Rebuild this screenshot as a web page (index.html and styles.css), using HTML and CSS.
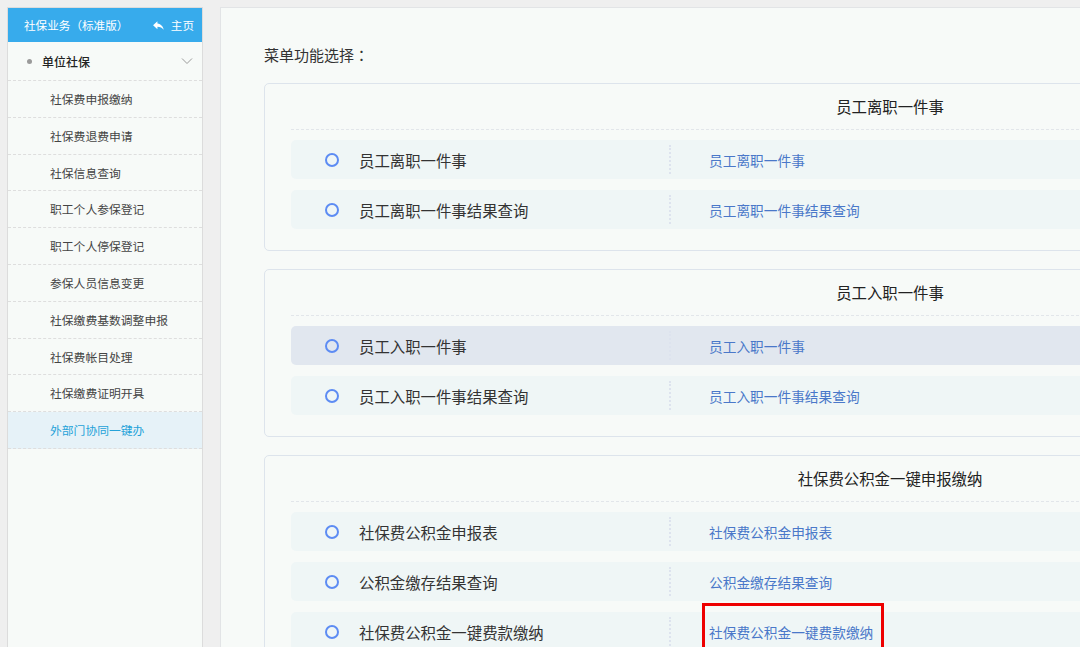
FILE: index.html
```html
<!DOCTYPE html>
<html lang="zh-CN">
<head>
<meta charset="utf-8">
<title>社保业务</title>
<link rel="stylesheet" href="styles.css">
</head>
<body>
<div class="page">
  <aside class="sidebar">
    <div class="side-head">
      <span class="side-title">社保业务（标准版）</span>
      <span class="home">
        <svg class="home-icon" viewBox="0 0 24 24" width="13" height="13"><path d="M10 8.5V4L2 11.5 10 19v-4.6c5.2 0 8.8 1.7 11.6 5.6-1.1-5.6-4.5-10.4-11.6-11.5z" fill="#ffffff"/></svg>
        主页
      </span>
    </div>
    <div class="group">
      <span class="dot"></span>
      <span class="group-name">单位社保</span>
      <svg class="chev" viewBox="0 0 12 8" width="12" height="8"><path d="M1 1.5l5 5 5-5" fill="none" stroke="#9a9a9a" stroke-width="1"/></svg>
    </div>
    <ul class="sub">
      <li>社保费申报缴纳</li>
      <li>社保费退费申请</li>
      <li>社保信息查询</li>
      <li>职工个人参保登记</li>
      <li>职工个人停保登记</li>
      <li>参保人员信息变更</li>
      <li>社保缴费基数调整申报</li>
      <li>社保费帐目处理</li>
      <li>社保缴费证明开具</li>
      <li class="active">外部门协同一键办</li>
    </ul>
  </aside>

  <main class="main">
    <h2 class="menu-title">菜单功能选择<span class="colon" lang="zh-TW">：</span></h2>

    <section class="card">
      <div class="card-title">员工离职一件事</div>
      <div class="rows">
        <div class="row"><div class="cell-name"><span class="radio"></span>员工离职一件事</div><div class="cell-link">员工离职一件事</div></div>
        <div class="row"><div class="cell-name"><span class="radio"></span>员工离职一件事结果查询</div><div class="cell-link">员工离职一件事结果查询</div></div>
      </div>
    </section>

    <section class="card">
      <div class="card-title">员工入职一件事</div>
      <div class="rows">
        <div class="row hover"><div class="cell-name"><span class="radio"></span>员工入职一件事</div><div class="cell-link">员工入职一件事</div></div>
        <div class="row"><div class="cell-name"><span class="radio"></span>员工入职一件事结果查询</div><div class="cell-link">员工入职一件事结果查询</div></div>
      </div>
    </section>

    <section class="card">
      <div class="card-title">社保费公积金一键申报缴纳</div>
      <div class="rows">
        <div class="row"><div class="cell-name"><span class="radio"></span>社保费公积金申报表</div><div class="cell-link">社保费公积金申报表</div></div>
        <div class="row"><div class="cell-name"><span class="radio"></span>公积金缴存结果查询</div><div class="cell-link">公积金缴存结果查询</div></div>
        <div class="row"><div class="cell-name"><span class="radio"></span>社保费公积金一键费款缴纳</div><div class="cell-link"><span class="marked">社保费公积金一键费款缴纳</span></div></div>
      </div>
    </section>
  </main>
</div>
</body>
</html>
```
FILE: styles.css
```css
*, *::before, *::after { box-sizing: border-box; }
html, body {
  margin: 0;
  padding: 0;
  background: #efefef;
  overflow: hidden;
  font-family: "Noto Sans CJK SC", "Noto Sans", sans-serif;
}
.page {
  display: flex;
  align-items: flex-start;
  padding: 7px 0 0 7px;
  gap: 17px;
  width: 1400px;
}
.sidebar {
  flex: 0 0 196px;
  min-height: 700px;
  background: #f7faf8;
  border: 1px solid #dcdcdc;
}
.side-head {
  height: 34px;
  background: #37abec;
  color: #fff;
  display: flex;
  align-items: center;
  justify-content: space-between;
  padding: 0 8px 0 16px;
  font-size: 11.6px;
}
.home { display: flex; align-items: center; gap: 6px; }
.home-icon { display: block; }
.group {
  height: 39px;
  display: flex;
  align-items: center;
  padding: 0 9px 0 19px;
  border-bottom: 1px dashed #dedede;
}
.dot {
  width: 5px; height: 5px; border-radius: 50%;
  background: #9a9a9a;
  margin-right: 10px;
}
.group-name { font-size: 12px; color: #222; font-weight: 500; flex: 1; }
.chev { display: block; }
.sub { list-style: none; margin: 0; padding: 0; }
.sub li {
  height: 36.8px;
  line-height: 35.8px;
  padding-left: 42px;
  font-size: 11.8px;
  color: #444;
  border-bottom: 1px dashed #dedede;
}
.sub li.active { background: #e6f2f8; color: #25a2d8; }

.main {
  flex: 0 0 1340px;
  min-height: 700px;
  background: #f7faf8;
  border: 1px solid #e2e4e6;
  padding: 35px 43px 0 43px;
}
.menu-title {
  margin: 0 0 16px;
  font-size: 15px;
  font-weight: normal;
  line-height: 24px;
  color: #333;
}
.colon { font-family: "Noto Sans CJK TC", "Noto Sans CJK SC", sans-serif; }
.card {
  border: 1px solid #dde4ec;
  border-radius: 5px;
  padding: 0 26px 21px;
  margin-bottom: 18px;
  background: #f7faf8;
}
.card-title {
  height: 46px;
  line-height: 45px;
  text-align: center;
  font-size: 15.4px;
  color: #222;
  border-bottom: 1px dashed #e2e6ea;
}
.rows {
  display: flex;
  flex-direction: column;
  gap: 11px;
  margin-top: 10px;
}
.row {
  height: 39px;
  display: flex;
  align-items: center;
  background: #eff6f6;
  border-radius: 5px;
}
.row.hover { background: #e1e7ef; }
.cell-name {
  width: 378px;
  display: flex;
  align-items: center;
  padding-left: 34px;
  font-size: 15.4px;
  color: #333;
}
.radio {
  width: 14px; height: 14px;
  border: 2px solid #5d8cf3;
  border-radius: 50%;
  margin-right: 20px;
  flex: 0 0 14px;
}
.cell-link {
  height: 29px;
  display: flex;
  align-items: center;
  border-left: 2px dotted #dde3ee;
  padding-left: 38px;
  font-size: 13.7px;
  color: #4a78c9;
}
.marked { position: relative; }
.marked::after {
  content: "";
  position: absolute;
  left: -7px;
  top: -19px;
  width: 182px;
  height: 48px;
  border: 3px solid #ee0000;
}
```
